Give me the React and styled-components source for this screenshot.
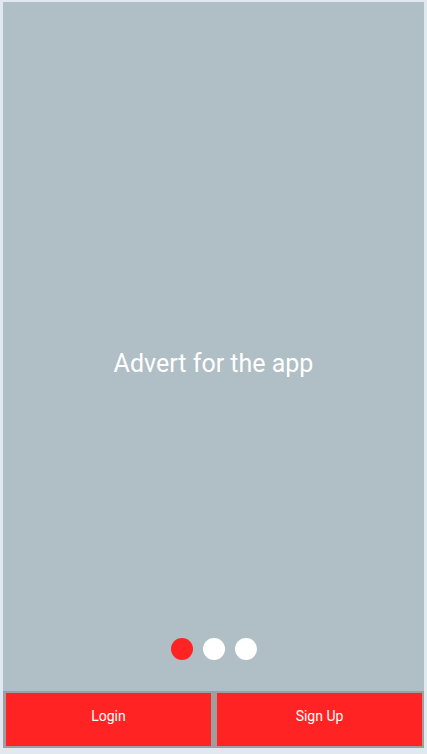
import React from 'react';
import styled, { createGlobalStyle } from 'styled-components';

const GlobalStyle = createGlobalStyle`
  html, body {
    margin: 0;
    padding: 0;
    background: #e2e8ef;
    font-family: Roboto, "Liberation Sans", sans-serif;
  }
`;

const Screen = styled.div`
  height: 754px;
  box-sizing: border-box;
  padding: 2px 3px 6px 3px;
  display: flex;
  flex-direction: column;
`;

const Advert = styled.div`
  flex: 1;
  background: #b0bec5;
  display: flex;
  flex-direction: column;
  align-items: center;
`;

const AdvertText = styled.div`
  flex: 1;
  display: flex;
  align-items: center;
  justify-content: center;
  color: #ffffff;
  font-size: 25px;
  padding-top: 87px;
`;

const Dots = styled.div`
  display: flex;
  gap: 10px;
  padding-bottom: 31px;
`;

const Dot = styled.span`
  width: 22px;
  height: 22px;
  border-radius: 50%;
  background: ${p => (p.$active ? '#ff2323' : '#ffffff')};
`;

const ButtonBar = styled.div`
  height: 57px;
  box-sizing: border-box;
  background: #9e9e9e;
  padding: 2px 2px 2px 3px;
  display: flex;
  gap: 6px;
`;

const Button = styled.button`
  flex: 1;
  border: none;
  background: #ff2323;
  color: #ffffff;
  font-family: Roboto, "Liberation Sans", sans-serif;
  font-size: 14px;
  padding: 0 0 7px 0;
  cursor: pointer;
`;

export default function App() {
  return (
    <>
      <GlobalStyle />
      <Screen>
        <Advert>
          <AdvertText>Advert for the app</AdvertText>
          <Dots>
            <Dot $active />
            <Dot />
            <Dot />
          </Dots>
        </Advert>
        <ButtonBar>
          <Button>Login</Button>
          <Button>Sign Up</Button>
        </ButtonBar>
      </Screen>
    </>
  );
}
